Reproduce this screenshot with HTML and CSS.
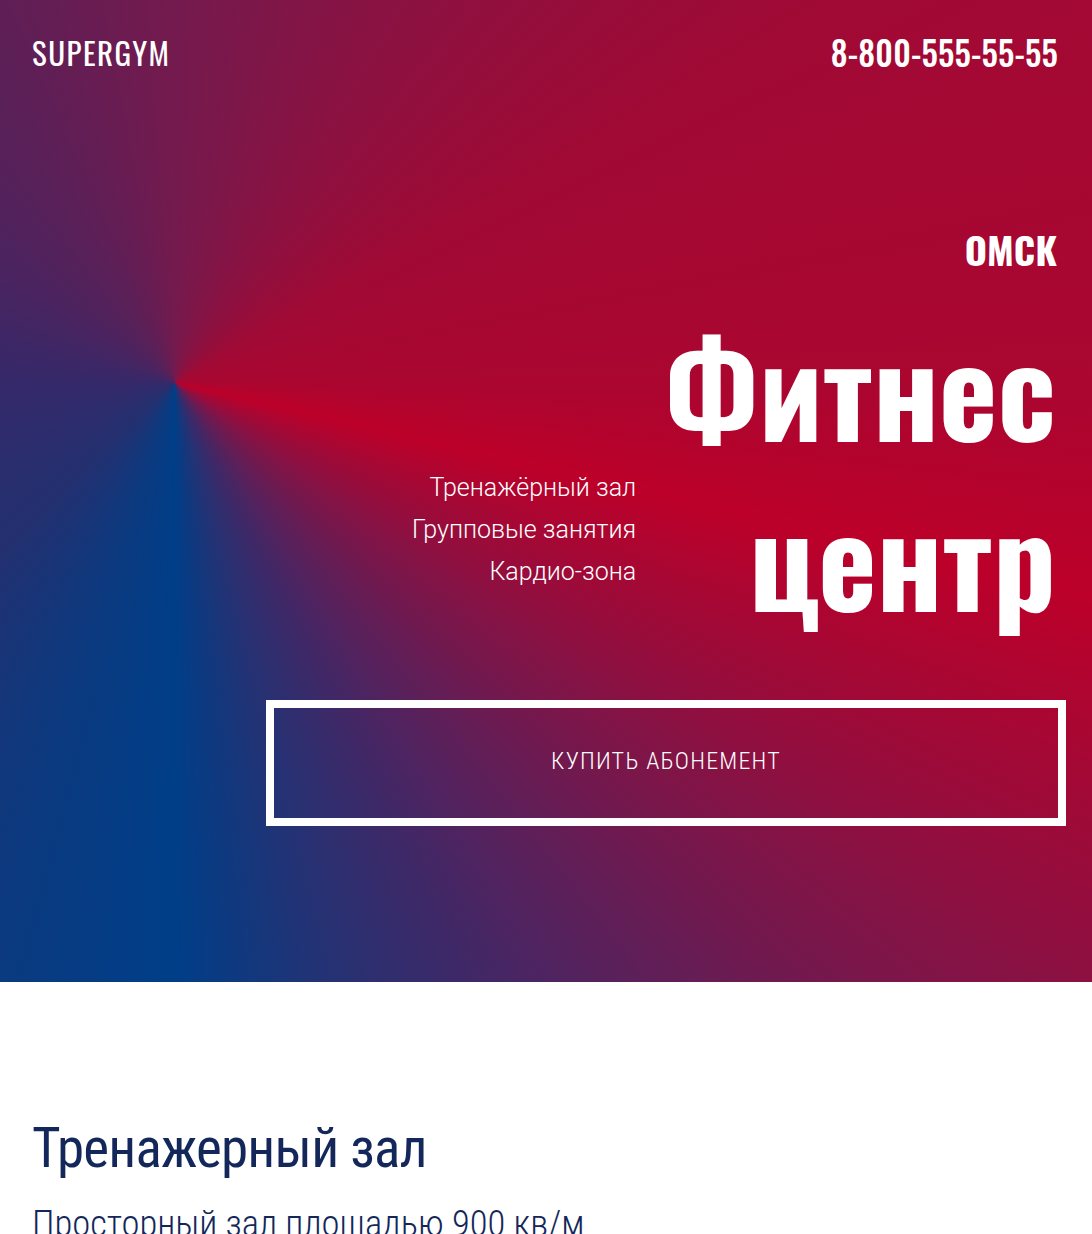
FILE: index.html
```html
<!DOCTYPE html>
<html lang="ru">
<head>
<meta charset="utf-8">
<title>SUPERGYM</title>
<link rel="stylesheet" href="styles.css">
</head>
<body>
<section class="hero">
  <header class="topbar">
    <div class="logo">SUPERGYM</div>
    <div class="phone">8-800-555-55-55</div>
  </header>
  <div class="hero-main">
    <div class="city">ОМСК</div>
    <div class="title-row">
      <ul class="features">
        <li>Тренажёрный зал</li>
        <li>Групповые занятия</li>
        <li>Кардио-зона</li>
      </ul>
      <h1 class="title"><span>Фитнес</span><span>центр</span></h1>
    </div>
    <a class="buy" href="#">КУПИТЬ АБОНЕМЕНТ</a>
  </div>
</section>
<section class="gym">
  <h2 class="gym-title">Тренажерный зал</h2>
  <p class="gym-text">Просторный зал площадью 900 кв/м</p>
</section>
</body>
</html>
```
FILE: styles.css
```css
html, body { margin: 0; padding: 0; }
body { font-family: Roboto, "Noto Sans", sans-serif; background: #fff; }

.hero {
  height: 982px;
  box-sizing: border-box;
  color: #fff;
  background: conic-gradient(from 0deg at 175px 383px,
    #741a4e 0deg, #8a1242 30deg, #a00a35 60deg, #aa0630 90deg, #bc0029 103deg,
    #8d1041 123deg, #651d55 139deg, #462664 151deg, #1e3477 168deg, #003e88 180deg,
    #0a3a80 196deg, #233070 226deg, #35296a 270deg, #5e1f56 335deg, #741a4e 360deg);
  display: flex;
  flex-direction: column;
}

.topbar {
  display: flex;
  justify-content: space-between;
  align-items: flex-start;
  padding: 32px 34px 0 32px;
}
.logo {
  font-family: Oswald, "Roboto Condensed", sans-serif;
  font-size: 31px; font-weight: 400; line-height: 40px; letter-spacing: 1.5px;
}
.phone {
  font-family: Oswald, "Roboto Condensed", sans-serif;
  font-size: 33px; font-weight: 500; line-height: 40px; margin-top: 1px; letter-spacing: 0.2px;
}

.hero-main {
  display: flex;
  flex-direction: column;
  align-items: flex-end;
  padding-right: 26px;
}
.city {
  margin: 152px 9px 0 0;
  font-family: Oswald, "Roboto Condensed", sans-serif;
  font-size: 38px; font-weight: 700; line-height: 48px;
}

.title-row { display: flex; align-items: flex-start; margin: 28px 10px 0 0; }
.features {
  list-style: none; margin: 166px 28px 0 0; padding: 0;
  text-align: right; font-weight: 300; font-size: 25px; line-height: 42px;
}
.title {
  margin: 0; display: flex; flex-direction: column; align-items: flex-end;
  font-family: Oswald, "Roboto Condensed", sans-serif;
  font-size: 125px; font-weight: 700; line-height: 170px;
}

.buy {
  margin-top: 59px;
  width: 800px; height: 126px; box-sizing: border-box;
  border: 8px solid #fff;
  padding-bottom: 4px;
  display: flex; align-items: center; justify-content: center;
  color: #fff; text-decoration: none;
  font-family: "Roboto Condensed", Roboto, sans-serif;
  font-size: 24px; font-weight: 300; letter-spacing: 1.2px;
}

.gym { padding: 134px 32px 0; color: #13275a; }
.gym-title {
  margin: 0; font-family: "Roboto Condensed", Roboto, sans-serif;
  font-size: 55px; font-weight: 400; line-height: 64px; letter-spacing: -0.8px;
}
.gym-text {
  margin: 20px 0 0; font-family: "Roboto Condensed", Roboto, sans-serif;
  font-size: 36.6px; font-weight: 300; line-height: 48px;
}
```
